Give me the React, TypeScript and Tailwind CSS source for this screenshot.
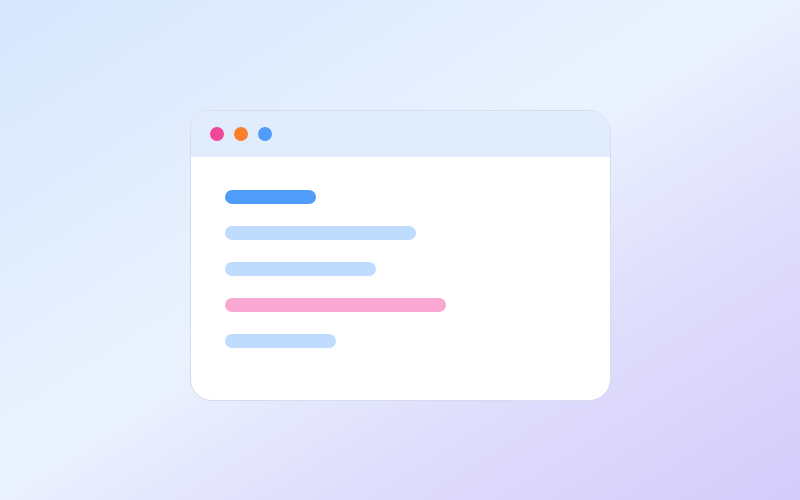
export default function App() {
  const bars = [
    { w: "w-[91px]", c: "bg-[#4f9cf9]" },
    { w: "w-[191px]", c: "bg-[#bfdbfe]" },
    { w: "w-[151px]", c: "bg-[#bfdbfe]" },
    { w: "w-[221px]", c: "bg-[#f9a8d4]" },
    { w: "w-[111px]", c: "bg-[#bfdbfe]" },
  ];
  return (
    <div className="w-[800px] h-[500px] overflow-hidden bg-[linear-gradient(to_bottom_right,#d7e7fd_0%,#eaf2fe_48%,#dfdcfc_72%,#d5ccfb_100%)] flex justify-center pt-[110px] font-['Inter',sans-serif]">
      <div className="w-[421px] h-[291px] rounded-[22px] border border-[#d3ddee] bg-white overflow-hidden flex flex-col">
        <div className="h-[46px] bg-[#e1edfc] flex items-center gap-[10px] pl-[19px] shrink-0">
          <span className="w-[14px] h-[14px] rounded-full bg-[#f0479a]" />
          <span className="w-[14px] h-[14px] rounded-full bg-[#f97f2c]" />
          <span className="w-[14px] h-[14px] rounded-full bg-[#4f9cf9]" />
        </div>
        <div className="flex flex-col gap-[22px] pl-[34px] pt-[33px]">
          {bars.map((b, i) => (
            <div key={i} className={`h-[14px] rounded-full ${b.w} ${b.c}`} />
          ))}
        </div>
      </div>
    </div>
  );
}
